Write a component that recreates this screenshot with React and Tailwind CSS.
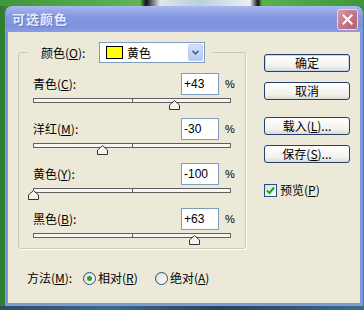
import React from 'react';

const rows = [
    { name: '青色', key: 'C', value: 43 },
    { name: '洋红', key: 'M', value: -30 },
    { name: '黄色', key: 'Y', value: -100 },
    { name: '黑色', key: 'B', value: 63 },
];

const TRACK = 198;

const fmt = (v) => (v > 0 ? `+${v}` : `${v}`);

const Slider = ({ value }) => {
    const left = ((value + 100) / 200) * (TRACK - 1);
    return (
        <div className="relative mt-[3px] h-[5px] w-[198px] border border-[#5f5f5f] bg-[#f7f6f0]">
            <div className="absolute left-[98px] top-0 h-full w-px bg-[#5f5f5f]"></div>
            <svg className="absolute top-[1px]" style={{ left: left - 6 }} width="11" height="10" viewBox="0 0 11 10">
                <polygon points="5.5,0.5 10.5,5 10.5,9.5 0.5,9.5 0.5,5" fill="#f4f3ee" stroke="#333" strokeWidth="1" />
            </svg>
        </div>
    );
};

const XpButton = ({ children, className = '', primary }) => (
    <div className={`h-[18px] w-[86px] rounded-[3px] border border-[#24406f] bg-[linear-gradient(to_bottom,#ffffff,#f3f2ec_70%,#dcdad0)] flex items-center justify-center text-[12px] leading-none text-black ${primary ? 'shadow-[inset_0_0_0_1px_#c4d6f7]' : ''} ${className}`}>
        {children}
    </div>
);

const Radio = ({ checked }) => (
    <div className="h-[13px] w-[13px] rounded-full border border-[#1d5281] bg-[linear-gradient(135deg,#dcdcd6,#ffffff)] flex items-center justify-center">
        {checked && <div className="h-[5px] w-[5px] rounded-full bg-[#2aa52a]"></div>}
    </div>
);

export default function App() {
    return (
        <div className="w-[364px] h-[310px] overflow-hidden flex flex-col bg-[linear-gradient(90deg,#2f7d2f,#5cb04e_20%,#3f963b_50%,#62b85a_80%,#3a8c36)] font-['Noto_Sans_CJK_SC',sans-serif] text-[12px] text-black">
            {/* top strip of the desktop picture */}
            <div className="h-[6px] shrink-0 bg-[linear-gradient(90deg,#3f963b_0,#5db653_140px,#111_146px,#dfe6ea_160px,#b9d0dc_200px,#e8f0f4_250px,#111_258px,#56b24e_262px,#3f963b_100%)]"></div>

            <div className="pl-[5px] h-[300px] shrink-0">
                <div className="w-[358px] h-[300px] flex flex-col rounded-t-[7px] overflow-hidden">
                    {/* title bar */}
                    <div className="h-[26px] shrink-0 flex items-center bg-[linear-gradient(to_bottom,#a9b8ef,#8597e0_40%,#7f92de_80%,#8b9ce3)]">
                        <span className="pl-[7px] text-[13px] font-bold text-[#e6ebfb] [text-shadow:1px_1px_0_#6474c0] tracking-[1px]">可选颜色</span>
                        <div className="ml-auto mr-[5px] h-[21px] w-[21px] rounded-[3px] border border-[#e9d6dd] bg-[linear-gradient(135deg,#d99aa8,#c0707f_60%,#b5606f)] flex items-center justify-center">
                            <svg width="11" height="11" viewBox="0 0 11 11">
                                <path d="M1.5 1.5 L9.5 9.5 M9.5 1.5 L1.5 9.5" stroke="#fff" strokeWidth="2" strokeLinecap="square" />
                            </svg>
                        </div>
                    </div>

                    {/* body */}
                    <div className="flex-1 flex border-x-[3px] border-b-[3px] border-[#8594e0] bg-[#ece9d8] pt-[10px] pl-[10px]">
                        <div className="flex flex-col">
                            <fieldset className="w-[228px] h-[207px] border border-[#cbc8b8] rounded-[3px] pl-[14px] pt-[10px] shadow-[1px_1px_0_#fff]">
                                <legend className="-ml-[6px] pl-[14px] pr-[7px]">
                                    <div className="flex items-center h-[21px]">
                                        <span className="w-[58px]">颜色(<u>O</u>):</span>
                                        <div className="w-[106px] h-[21px] border border-[#7f9db9] bg-white flex items-center">
                                            <div className="ml-[6px] h-[13px] w-[17px] border border-black bg-[#ffff00]"></div>
                                            <span className="ml-[4px]">黄色</span>
                                            <div className="ml-auto mr-[1px] h-[17px] w-[15px] rounded-[2px] border border-[#bccdf5] bg-[linear-gradient(to_bottom,#d4e0fc,#b6c9f7)] flex items-center justify-center">
                                                <svg width="7" height="5" viewBox="0 0 7 5">
                                                    <path d="M0.5 0.8 L3.5 3.8 L6.5 0.8" stroke="#4d6185" strokeWidth="1.6" fill="none" />
                                                </svg>
                                            </div>
                                        </div>
                                    </div>
                                </legend>

                                {rows.map((r) => (
                                    <div key={r.key} className="mb-[15px] w-[198px]">
                                        <div className="flex items-center h-[22px]">
                                            <span className="flex-1">{r.name}(<u>{r.key}</u>):</span>
                                            <div className="w-[38px] h-[22px] border border-[#7f9db9] bg-white flex items-center pl-[2px] font-['Liberation_Sans',sans-serif] text-[12px]">
                                                {fmt(r.value)}
                                            </div>
                                            <span className="ml-[6px] w-[6px] font-['Liberation_Sans',sans-serif] text-[11px]">%</span>
                                        </div>
                                        <Slider value={r.value} />
                                    </div>
                                ))}
                            </fieldset>

                            <div className="mt-[22px] pl-[9px] flex items-center h-[14px]">
                                <span className="w-[56px]">方法(<u>M</u>):</span>
                                <Radio checked />
                                <span className="ml-[2px] w-[57px]">相对(<u>R</u>)</span>
                                <Radio />
                                <span className="ml-[2px]">绝对(<u>A</u>)</span>
                            </div>
                        </div>

                        <div className="ml-[18px] mt-[12px] flex flex-col">
                            <XpButton primary>确定</XpButton>
                            <XpButton className="mt-[10px]">取消</XpButton>
                            <XpButton className="mt-[17px]">载入(<u>L</u>)...</XpButton>
                            <XpButton className="mt-[10px]">保存(<u>S</u>)...</XpButton>
                            <div className="mt-[18px] flex items-center">
                                <div className="h-[13px] w-[13px] border border-[#1d5281] bg-[linear-gradient(135deg,#dcdcd6,#ffffff)] flex items-center justify-center">
                                    <svg width="9" height="9" viewBox="0 0 9 9">
                                        <path d="M1 4.5 L3.5 7 L8 1.5" stroke="#21a121" strokeWidth="2" fill="none" />
                                    </svg>
                                </div>
                                <span className="ml-[3px]">预览(<u>P</u>)</span>
                            </div>
                        </div>
                    </div>
                </div>
            </div>

            <div className="h-[4px] shrink-0 bg-[linear-gradient(90deg,#2a4f5e,#3a6d7a_30%,#234655_60%,#3b6f7c)]"></div>
        </div>
    );
}
